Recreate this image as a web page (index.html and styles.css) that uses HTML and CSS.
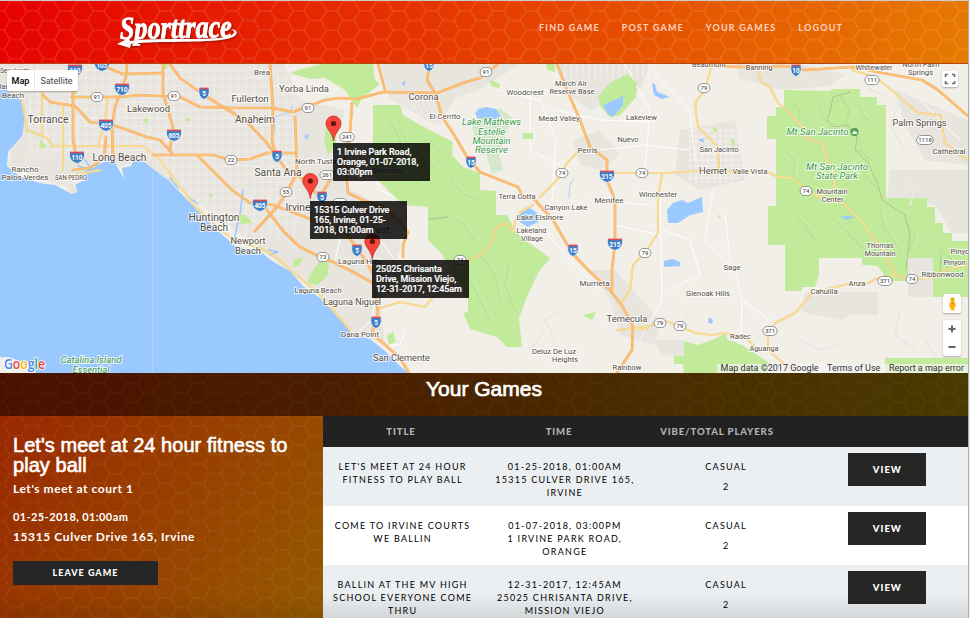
FILE: index.html
```
<!DOCTYPE html>
<html lang="en">
<head>
<meta charset="utf-8">
<title>Sporttrace</title>
<link rel="stylesheet" href="styles.css">
</head>
<body>
<div class="page">
  <header class="topbar">
    <svg class="hexes"><defs><pattern id="hex" width="33.3" height="19.1" patternUnits="userSpaceOnUse" x="26.6" y="10"><path d="M0 0H11.1L16.65 9.55H27.75L33.3 0M0 19.1H11.1L16.65 9.55M27.75 9.55L33.3 19.1" fill="none" stroke="#fff" stroke-opacity=".17" stroke-width="1"/></pattern></defs><rect width="100%" height="100%" fill="url(#hex)"/></svg>
    <svg class="logo" viewBox="0 0 124 36" role="img" aria-label="Sporttrace">
      <text class="logo-text" x="3" y="25" textLength="112" lengthAdjust="spacingAndGlyphs" transform="rotate(-1 60 25)">Sporttrace</text>
      <path d="M0 31L12 25L13 28C45 24 85 28 108 24C117 22 120 19 114 16C122 17 122 23 112 25.500C85 31 45 27 14 31L13 35Z" fill="#fff"/>
    </svg>
    <nav class="nav"><a>FIND GAME</a><a>POST GAME</a><a>YOUR GAMES</a><a>LOGOUT</a></nav>
  </header>

  <section class="map">
    <svg id="terrain" class="terrain" viewBox="0 64 968 309"></svg>
    <div class="map-type"><span class="on">Map</span><span>Satellite</span></div>
    <div class="map-btn full"><svg viewBox="0 0 12 12"><path d="M1.500 4V1.500H4M8 1.500H10.500V4M10.500 8V10.500H8M4 10.500H1.500V8" fill="none" stroke="#707070" stroke-width="1.600"/></svg></div>
    <div class="map-btn pegman"><svg viewBox="0 0 10 16"><circle cx="5" cy="3" r="2.500" fill="#f5a300"/><path d="M2 6H8L9 11H7.500L7 15H3L2.500 11H1Z" fill="#fbb316"/><path d="M3 6H7L5 8Z" fill="#d98200"/></svg></div>
    <div class="map-btn zoomer"><svg viewBox="0 0 18 36"><path d="M5.500 9H12.500M9 5.500V12.500M5.500 27H12.500" stroke="#666" stroke-width="2"/></svg></div>
    <div class="tip tip-a">1 Irvine Park Road, Orange, 01-07-2018, 03:00pm</div>
    <div class="tip tip-b">15315 Culver Drive 165, Irvine, 01-25-2018, 01:00am</div>
    <div class="tip tip-c">25025 Chrisanta Drive, Mission Viejo, 12-31-2017, 12:45am</div>
    <div class="credits"><span>Map data ©2017 Google</span><span>Terms of Use</span><span>Report a map error</span></div>
  </section>

  <section class="games">
    <div class="band"><svg class="hexes faint"><rect width="100%" height="100%" fill="url(#hex)"/></svg><h1>Your Games</h1></div>
    <div class="split">
      <aside class="card">
        <svg class="hexes dim"><rect width="100%" height="100%" fill="url(#hex)"/></svg>
        <h2>Let's meet at 24 hour fitness to play ball</h2>
        <p class="note">Let's meet at court 1</p>
        <p class="when">01-25-2018, 01:00am</p>
        <p class="where">15315 Culver Drive 165, Irvine</p>
        <button class="leave">LEAVE GAME</button>
      </aside>
      <div class="list">
        <div class="head"><span>TITLE</span><span>TIME</span><span>VIBE/TOTAL PLAYERS</span></div>
        <div class="row"><div>LET'S MEET AT 24 HOUR FITNESS TO PLAY BALL</div><div>01-25-2018, 01:00AM<br>15315 CULVER DRIVE 165, IRVINE</div><div>CASUAL<p>2</p></div><button>VIEW</button></div>
        <div class="row"><div>COME TO IRVINE COURTS WE BALLIN</div><div>01-07-2018, 03:00PM<br>1 IRVINE PARK ROAD, ORANGE</div><div>CASUAL<p>2</p></div><button>VIEW</button></div>
        <div class="row"><div>BALLIN AT THE MV HIGH SCHOOL EVERYONE COME THRU</div><div>12-31-2017, 12:45AM<br>25025 CHRISANTA DRIVE, MISSION VIEJO</div><div>CASUAL<p>2</p></div><button>VIEW</button></div>
      </div>
    </div>
    <div class="shade"></div>
  </section>
</div>
<script src="map.js"></script>
</body>
</html>
```
FILE: styles.css
```
* { box-sizing: border-box; }
body { margin: 0; background: #f4f4f4; overflow: hidden; font-family: Lato, sans-serif; }
h1, h2, p { margin: 0; }
button { border: 0; border-radius: 0; background: #262626; color: #fff; font: 900 9.500px Lato, sans-serif; letter-spacing: 1px; padding: 0; }
.page { width: 969px; height: 618px; border-top: 1px solid #ccc; border-right: 1px solid #aaa; overflow: hidden; }

.topbar { position: relative; height: 63px; display: flex; align-items: flex-start; background: linear-gradient(105deg, #e60000, #e67a00); border-bottom: 1px solid #b04a10; }
.hexes { position: absolute; inset: 0; width: 100%; height: 100%; }
.logo { position: relative; width: 124px; height: 36px; margin: 12px 0 0 117px; overflow: visible; filter: drop-shadow(1px 1px 1px rgba(80,0,0,.5)); }
.logo-text { font: italic bold 32px "Liberation Serif", serif; fill: #fff; stroke: #fff; stroke-width: .9px; }
.nav { position: relative; display: flex; gap: 21.800px; margin: 20px 0 0 298px; font-weight: 700; font-size: 9px; line-height: 13px; letter-spacing: 1.2px; color: #ffd2c0; white-space: nowrap; }

.map { position: relative; height: 309px; overflow: hidden; font-family: Roboto, sans-serif; }
.terrain { display: block; width: 968px; height: 309px; background: #f2efe9; }
.map-type { position: absolute; left: 7px; top: 6px; height: 21px; display: flex; background: #fff; border-radius: 2px; box-shadow: 0 1px 2px rgba(0,0,0,.3); font-size: 9px; line-height: 22px; color: #444; }
.map-type span { width: 43px; text-align: center; }
.map-type .on { width: 28px; color: #000; font-weight: 500; border-right: 1px solid #e6e6e6; }
.map-btn { position: absolute; background: #fff; border-radius: 2px; box-shadow: 0 1px 2px rgba(0,0,0,.3); display: flex; align-items: center; justify-content: center; }
.full { left: 942px; top: 7px; width: 16px; height: 16px; }
.full svg { width: 12px; height: 12px; }
.pegman { left: 943px; top: 230px; width: 18px; height: 19px; }
.pegman svg { width: 9px; height: 14px; }
.zoomer { left: 943px; top: 256px; width: 18px; height: 36px; }
.tip { position: absolute; width: 97px; height: 38px; padding: 4px 0 0 4px; background: rgba(0,0,0,.82); color: #fff; font-size: 9px; font-weight: 500; line-height: 10px; letter-spacing: -.05px; -webkit-text-stroke: .2px #fff; }
.tip-a { left: 333px; top: 79px; }
.tip-b { left: 310px; top: 137px; padding-right: 14px; }
.tip-c { left: 372px; top: 196px; padding-right: 6px; }
.credits { position: absolute; right: 0; bottom: 0; height: 9px; display: flex; gap: 8.500px; padding: 0 4px; background: rgba(245,245,245,.7); color: #333; font-size: 9px; line-height: 9px; white-space: nowrap; }

.games { position: relative; }
.band { position: relative; height: 43px; background: linear-gradient(100deg, #4a1000, #4a2200 45%, #4a3a00); }
.faint { opacity: .3; }
.dim { opacity: .5; }
h1 { position: relative; text-align: center; color: #fff; font: 21px/32px "Liberation Sans", sans-serif; -webkit-text-stroke: .7px #fff; }
.split { display: flex; height: 202px; overflow: hidden; }
.card { position: relative; width: 323px; padding: 19px 13px 0; color: #fff; background: linear-gradient(125deg, #9a2800, #984200 55%, #945a00); }
.card > :not(svg) { position: relative; }
h2 { font: 20px/20px "Liberation Sans", sans-serif; letter-spacing: .05px; margin-right: -10px; -webkit-text-stroke: .6px #fff; }
.note { margin-top: 6px; font-size: 12px; line-height: 16px; font-weight: 700; letter-spacing: .55px; }
.when { margin-top: 13px; font-size: 11px; line-height: 14px; font-weight: 700; letter-spacing: .4px; }
.where { margin-top: 5px; font-size: 12px; line-height: 16px; font-weight: 700; letter-spacing: .6px; }
.leave { display: block; width: 145px; height: 24px; margin-top: 16px; padding-bottom: 2px; font-weight: 900; font-size: 9px; }
.list { width: 645px; }
.head { display: grid; grid-template-columns: repeat(4, 158px); margin-left: -1px; padding-left: 1px; height: 31px; background: #222; color: #b4b4b4; font-size: 9.500px; font-weight: 900; line-height: 31px; letter-spacing: .9px; text-align: center; }
.head span { position: relative; left: -1px; }
.row { display: grid; grid-template-columns: repeat(4, 1fr); height: 59px; background: #ebeff2; font-size: 9px; line-height: 13px; letter-spacing: 1.250px; text-align: center; color: #000; }
.row:nth-child(odd) { background: #fff; }
.row > div { padding: 13px 8px 0; }
.row > div:first-child { padding: 13px 9px 0 7px; }
.row p { margin-top: 7px; }
.row button { width: 78px; height: 33px; margin: 6px auto 0; }
.shade { position: absolute; left: 0; right: 0; bottom: 0; height: 24px; background: linear-gradient(transparent, rgba(0,0,0,.1)); }

.label { font-family: Roboto, sans-serif; fill: #554d45; stroke: #fff; stroke-width: 2px; stroke-opacity: .75; paint-order: stroke; text-anchor: middle; }
.park { fill: #3f9a4c; font-style: italic; }
.route { font: 500 6px Roboto, sans-serif; fill: #555; text-anchor: middle; }
.route.inter { fill: #fff; font-weight: 700; font-size: 6.500px; }
.google { font: 600 14px "Open Sans", sans-serif; stroke: #fff; stroke-width: 1.5px; paint-order: stroke; }
```
FILE: map.js
```
const out = [];
const poly = (fill, pts) => out.push(`<polygon points="${pts}" fill="${fill}"/>`);
const line = (color, width, pts) => out.push(`<polyline points="${pts}" fill="none" stroke="${color}" stroke-width="${width}" stroke-linejoin="round" stroke-linecap="round"/>`);
const URBAN = '#e8e4de', PARK = '#c1ea9b', SEA = '#99c9ff', FREEWAY = '#fdc077', HIGHWAY = '#fbe09a';

// Built-up areas
poly(URBAN, '0,64 285,64 300,100 345,110 330,160 352,190 398,215 400,250 380,300 385,345 350,330 320,295 262,250 180,190 140,160 60,185 8,166 20,110 0,85');
poly(URBAN, '380,64 520,64 480,90 455,98 440,125 425,120 390,98');
poly(URBAN, '555,64 650,64 640,90 590,110 565,90');
poly(URBAN, '573,140 600,130 620,155 600,170 580,165');
poly(URBAN, '680,130 735,120 745,180 700,190 675,175');
poly(URBAN, '735,64 800,64 845,74 830,86 780,90 740,78');
poly(URBAN, '895,90 968,120 968,165 925,160 905,125');
poly(URBAN, '590,270 615,270 660,320 655,345 620,335 610,300');
poly(URBAN, '805,292 878,292 878,315 850,315 840,320 802,312');
poly(URBAN, '887,198 935,205 952,233 968,233 968,170 890,170');
poly(URBAN, '908,258 933,258 933,297 908,297');
poly(URBAN, '655,340 684,340 684,356 660,355');

// Local street grid
for (let x = 30; x < 300; x += 8) line('#f7f5f2', .7, `${x},66 ${x},${x < 130 ? 155 : Math.min(240, x + 10)}`);
for (let y = 70; y < 230; y += 8) line('#f7f5f2', .7, `${y < 155 ? 30 : y},${y} 300,${y}`);
for (let x = 565; x < 650; x += 6) line('#faf9f7', .7, `${x},64 ${x},78`);
for (let x = 690; x < 738; x += 6) line('#faf9f7', .7, `${x},128 ${x},182`);
for (let y = 130; y < 184; y += 6) line('#faf9f7', .7, `688,${y} 740,${y}`);
for (let i = 0; i < 7; i++) line('#f9f7f4', .7, `${395 + i * 6},${92 + i} ${410 + i * 6},${112 + i * 3}`);
['500,90 540,100 556,140 552,200', '555,110 600,120 650,122', '530,90 530,150 570,170', '540,225 570,260 600,290', '625,64 650,110 645,170',
 '655,75 690,110 695,160', '660,200 662,300 640,340', '713,190 705,240 735,270 742,300 770,320', '725,215 730,260', '742,300 741,340',
 '650,225 690,240 700,275 670,290', '375,300 372,320 360,330', '330,210 340,240 335,260', '385,210 380,240 395,260', '920,100 960,140', '370,165 380,190 400,200',
 '405,330 400,345 390,345', '600,150 645,145 690,150', '590,200 650,205', '615,225 660,235'].forEach(p => line('#fff', 1, p));

// Ocean
poly(SEA, '0,83 8,92 20,98 25,118 22,136 8,152 7,166 19,176 40,183 55,185 72,194 77,190 75,185 84,180 83,172 95,167 112,158 118,168 124,179 122,168 131,166 134,160 143,161 157,172 168,180 176,188 195,208 218,231 235,246 262,253 272,261 290,271 303,286 320,298 340,319 352,334 370,339 385,351 400,366 408,373 0,373');
poly('#e8e4de', '62,182 72,194 78,192 72,183');
line('#b3d5f8', 1, '152.500,172 152.500,373');
poly('#f2efe9', '0,357 8,357 20,361 34,368 36,373 0,373');
['85,160 92,170 98,172', '78,166 90,170', '93,173 100,161 108,158', '170,178 178,188', '269,250 278,252 270,255', '243,190 240,215 234,240', '190,198 198,204'].forEach(p => line(SEA, 1.5, p));

// Parks and forest
poly(PARK, '373,105 400,105 403,115 420,125 453,142 452,155 463,167 480,173 480,190 496,191 496,215 507,215 515,230 522,238 550,258 538,273 527,297 519,318 522,347 507,347 497,337 470,329 463,313 468,312 468,298 441,253 428,240 428,207 403,205 388,190 373,175');
poly(PARK, '322,64 373,64 375,80 380,84 362,98 357,108 345,90 325,78 310,79 290,73 298,70');
poly(PARK, '784,90 830,91 832,89 860,89 860,97 877,97 877,105 886,105 886,198 927,198 927,207 935,207 935,223 943,223 943,233 952,233 952,241 968,241 968,297 933,297 933,258 908,258 908,281 887,281 878,266 862,265 862,258 819,258 819,274 815,287 802,287 802,291 785,291 785,245 768,245 768,206 776,206 776,139 767,139 767,116 776,116 776,107 784,107');
poly(PARK, '684,341 698,345 712,340 725,334 728,340 742,345 768,362 768,373 684,373 683,364 674,364 674,356 684,356');
poly(PARK, '885,358 968,358 968,373 885,373');
poly(PARK, '598,97 605,88 610,83 628,74 637,83 636,97 620,115 610,117 601,107');
poly(PARK, '322,257 329,263 328,275 318,285 307,283 310,275');
poly(PARK, '327,120 336,125 336,143 328,155 324,140');
poly(PARK, '294,260 303,257 300,264 293,268');
poly(PARK, '235,218 244,214 253,223 241,224');
poly(PARK, '523,133 533,133 533,139 523,139');
poly(PARK, '546,64 555,64 555,72 547,70');
poly(PARK, '490,80 500,84 499,88 491,86');
poly('#d5e8cc', '470,120 500,108 512,118 500,150 480,155');
poly('#d5e8cc', '485,150 498,150 503,170 492,174');
['39,145 41,140 47,147 42,149', '184,120 190,117 189,122', '142,120 148,118 147,124', '72,90 77,90 77,95', '582,315 596,312 592,320', '160,64 168,64 166,70', '712,127 719,130 714,132', '730,138 735,140 733,148', '209,193 213,195 210,198', '717,215 721,216 720,219', '387,335 393,332 396,342 389,345'].forEach(p => poly(PARK, p));
// Terrain relief
['790,100 800,110 797,125 810,130', '840,95 850,110 845,125 860,140', '855,100 865,118 875,122', '860,150 870,160 865,175 878,190', '795,215 805,225 815,240', '830,215 850,235 865,250', '880,210 885,230 900,250', '785,150 795,160 793,180', '400,130 410,150 425,155 435,170', '390,120 400,140 405,165 420,185', '440,215 460,220 475,240', '450,180 465,195 480,200', '480,255 495,275 500,300', '470,280 480,300 490,320', '510,260 505,285 515,310', '425,140 440,150', '820,110 825,120 838,126', '905,220 915,235 910,250', '940,250 955,262 960,280'].forEach(p => { line('#b8e394', 1.5, p); line('#c8eea6', 1, p.replace(/(\d+),/g, (m, x) => `${+x + 3},`)); });
['560,310 545,320 555,340', '690,310 680,330', '900,100 890,125 905,150', '880,70 870,90 885,95', '900,310 895,335 915,350', '925,340 935,355', '800,340 820,350 840,345', '905,180 915,190 910,205', '800,75 815,85', '545,330 530,350'].forEach(p => line('#ebe7e1', 2, p));
out.push('<g stroke-dasharray="2 1.500" opacity=".7">');
line('#a89f86', 1, '850,92 833,97 830,112 827,120 833,127 848,125 857,138 855,150 868,163 878,185 882,200 905,215 910,235 906,270');
line('#a89f86', 1, '429,219 448,217');
line('#a89f86', 1, '941,255 940,272');
out.push('</g>');

// Lakes
['475,114 478,109 486,107 496,109 501,116 495,119 478,118', '517,215 530,208 537,213 538,222 528,227 520,222', '667,210 673,203 682,200 688,203 702,197 703,212 690,215 678,223 668,223', '664,261 673,259 680,262 680,266 664,267', '603,105 615,100 623,96 623,105 613,117 607,113', '652,83 655,84 657,92 670,97 662,99 654,95', '840,217 846,216 855,217 847,220', '709,317 713,320 712,324 708,322', '698,140 703,138 704,143', '402,83 406,80 404,87', '304,136 309,134 307,140'].forEach(p => poly(SEA, p));
line('#a9d0fa', 1, '274,134 275,117 290,112 293,105');
line('#a9d0fa', 1, '569,198 570,185 574,178');

// Highways
['540,197 557,180 567,163 580,150', '380,308 400,302 425,307 432,298 445,285 467,262 483,253 493,240 495,228 507,223 513,232 515,222 520,212 533,205', '607,173 645,173 665,173 698,171 768,172 778,177 792,178 805,188 818,197 842,203 858,217 875,240 885,253 895,273 902,278 912,279 928,278 952,268 968,265', '895,275 878,278 868,283 848,284 812,293 795,313 775,323 768,333 768,350 783,363 790,373', '617,330 645,327 665,321 682,327 695,333 712,335 725,333 745,337 755,347 768,350', '712,64 705,90 695,103 698,127 718,147 719,170', '758,72 762,83 770,87 778,103 792,115 802,127 805,138 822,143 827,160 835,177 833,190 818,197', '852,70 875,77 888,87 918,113 940,115 945,143 960,155 968,160', '662,174 658,197 658,233 645,253 633,265 630,290 622,302', '53,146 143,146 160,160 180,187 195,206 218,228 235,240 262,249 275,256 300,278 320,295 350,330', '22,100 27,130 47,138 53,146', '42,93 42,137', '63,107 63,170', '108,98 105,120 98,147', '60,178 100,170', '633,328 648,329'].forEach(p => { line('#eecb78', 2.1, p); line(HIGHWAY, 1.3, p); });
['430,64 427,80 435,93 442,117 453,133 467,157 480,172 500,180 518,187 523,197 533,198 553,220 572,253 590,272 610,290 623,307 633,327 632,350 617,373', '557,64 567,90 580,120 590,147 607,160 607,180 615,200 615,243 612,270 612,290', '72,97 120,97 140,95 180,97 200,107 233,108 273,108 293,112 303,108 325,100 340,98 357,99 383,92 437,93 463,83 480,78 497,65', '378,64 385,90', '352,103 350,133 345,160 348,193 363,200 385,208 400,222 408,232 403,245 403,257', '170,64 180,78 207,97 233,113 247,122 267,143 277,158 287,170 300,177 320,197 335,217 353,243 363,257 373,273 375,290 378,313 372,333 383,343 400,358 409,373', '43,95 50,102 75,106 90,122 113,125 133,132 147,137 160,140 172,153', '197,155 217,175 232,190 250,203 273,205 308,218 340,235', '267,210 280,227 287,235 300,247 320,257 333,262 353,272 373,283', '255,231 277,207 287,192 297,173 295,117', '153,155 213,155 230,160 250,159 267,153 295,153', '127,64 126,77 115,107 112,127 113,157', '73,70 73,140 78,163', '163,64 163,93 173,127 170,150', '100,64 113,70 123,74 163,73', '270,64 273,110 272,140 275,153', '708,66 745,67 785,66 805,70 852,67 888,74 922,80 938,90 968,116', '73,170 90,168 104,158 106,137', '320,197 331,178 345,160'].forEach(p => { line('#f4ac5c', 2.7, p); line(FREEWAY, 1.8, p); });

// Route shields: [number, x, y]
[['91', 97, 97], ['91', 174, 96], ['91', 308, 108], ['22', 231, 160], ['55', 286, 192], ['241', 347, 137], ['261', 327, 175], ['91', 486, 72], ['74', 562, 173], ['74', 642, 173], ['79', 704, 88], ['111', 872, 80], ['1118', 925, 140], ['74', 806, 191], ['73', 323, 257], ['133', 340, 203], ['74', 460, 260], ['79', 645, 253], ['79', 660, 323], ['79', 680, 326], ['371', 770, 331], ['371', 885, 281], ['74', 912, 279]]
  .forEach(([n, x, y]) => { const w = 7 + n.length * 2.4; out.push(`<rect x="${x - w / 2}" y="${y - 4.5}" width="${w}" height="9" rx="4.500" fill="#fff" stroke="#777" stroke-width=".8"/><text class="route" x="${x}" y="${y + 2.2}">${n}</text>`); });
[['110', 75, 70], ['105', 102, 65], ['710', 122, 89], ['405', 106, 125], ['605', 174, 135], ['110', 77, 157], ['5', 204, 93], ['5', 277, 156], ['405', 260, 205], ['5', 322, 197], ['5', 357, 250], ['5', 376, 322], ['15', 429, 65], ['15', 471, 162], ['215', 607, 176], ['15', 573, 250], ['215', 615, 244], ['10', 796, 70]]
  .forEach(([n, x, y]) => { const w = n.length > 2 ? 8 : 5.5; out.push(`<path d="M${x - w + .5} ${y - 5}H${x + w - .5}Q${x + w + 1} ${y + 4} ${x} ${y + 6.5}Q${x - w - 1} ${y + 4} ${x - w + .5} ${y - 5}Z" fill="#3f7fc6" stroke="#fff" stroke-width=".6"/><path d="M${x - w + 1} ${y - 4.6}H${x + w - 1}" stroke="#dd4a52" stroke-width="1.600"/><text class="route inter" x="${x}" y="${y + 3}">${n}</text>`); });

// Place names: [text, centre x, baseline, width, size]
const label = cls => ([t, x, y, w, s]) => out.push(`<text class="label ${cls}" x="${x}" y="${y}" font-size="${s}" textLength="${w}" lengthAdjust="spacingAndGlyphs">${t}</text>`);
[['Sepulveda', 15, 73, 30, 8], ['Manhattan', 13, 89, 37, 8], ['Beach', 13, 98, 22, 8], ['Torrance', 48, 123, 41, 10], ['Lakewood', 148.5, 112, 43, 9], ['Fullerton', 250, 102, 37, 9], ['Anaheim', 255, 122.5, 40, 10], ['Brea', 262, 75, 16, 8], ['Yorba Linda', 304, 92, 50, 9.5], ['Long Beach', 119.5, 161, 54, 10.5], ['Rancho', 25, 171.5, 27, 8], ['Palos Verdes', 25, 180, 47, 8], ['SAN PEDRO', 71, 179.5, 32, 6.5], ['Santa Ana', 278, 176, 47, 10], ['North Tustin', 317, 164, 44, 8], ['Irvine', 298, 211, 25, 10], ['Huntington', 214, 221, 51, 10], ['Beach', 214, 231, 28, 10], ['Newport', 248, 244, 35, 9.5], ['Beach', 248, 254, 26, 9.5], ['Laguna Hills', 360, 264, 44, 8], ['Laguna Beach', 318, 293, 47, 8], ['Laguna Niguel', 352, 305, 58, 9.5], ['Dana Point', 360, 337, 38, 8], ['San Clemente', 401.5, 361, 57, 9.5], ['Silverado', 388, 173, 31, 8], ['Lake Forest', 363, 233, 54, 9.5],
 ['Corona', 423.5, 100, 30, 9.5], ['El Cerrito', 445, 119, 31, 8], ['Woodcrest', 525, 95, 37, 8], ['March Air', 571, 86, 32, 8], ['Reserve Base', 572, 94, 45, 8], ['Mead Valley', 559, 121, 41, 8], ['Nuevo', 628, 142, 21, 8], ['Lakeview', 641.5, 120, 31, 8], ['Perris', 587.5, 153, 20, 8], ['Terra Cotta', 517, 199, 37, 8], ['Menifee', 609, 203, 29, 8], ['Canyon Lake', 566, 210, 43, 8], ['Lake Elsinore', 540, 219.5, 47, 8], ['Lakeland', 531.5, 233, 30, 8], ['Village', 532, 241, 22, 8], ['Murrieta', 594.5, 286, 30, 8], ['Temecula', 627, 322, 41, 9.5], ['Deluz De Luz', 554, 354, 44, 8], ['Heights', 565, 362, 26, 8], ['Rainbow', 627, 370, 29, 8], ['Winchester', 658, 197, 38, 8], ['San Jacinto', 719, 152, 39, 8], ['Hemet', 713, 174, 28, 9.5], ['Valle Vista', 750, 173.5, 35, 8], ['Beaumont', 709, 67, 34, 8], ['Banning', 759, 70, 27, 8], ['Whitewater', 874, 70, 37, 8], ['North Palm', 921, 67, 37, 8], ['Springs', 920.5, 75, 25, 8], ['Palm Springs', 919.500, 125.5, 54, 9.5], ['Cathedral', 949, 154, 33, 8], ['Mountain', 832, 194, 31, 8], ['Center', 832.5, 202, 22, 8], ['Thomas', 880, 248, 27, 8], ['Mountain', 880, 255.5, 31, 8], ['Sage', 732, 270, 17, 8], ['Glenoak Hills', 708, 296, 44, 8], ['Cahuilla', 824, 294, 27, 8], ['Anza', 857, 285.5, 17, 8], ['Pinyon', 962, 254, 23, 8], ['Pinyon', 954.5, 265, 22, 8], ['Ribbonwood', 942.5, 277, 42, 8], ['Radec', 740.5, 339, 21, 8], ['Aguanga', 764, 351, 29, 8]].forEach(label(''));
[['Lake Mathews', 491.5, 125, 59, 9], ['Estelle', 491.5, 134.500, 27, 9], ['Mountain', 491.5, 143.500, 38, 9], ['Reserve', 491.5, 153, 33, 9], ['Mt San Jacinto', 817.500, 135, 62, 9], ['Mt San Jacinto', 837, 169.500, 62, 9], ['State Park', 837, 178.500, 42, 9], ['Catalina Island', 91, 363, 61, 9], ['Essential', 91, 372.500, 37, 9]].forEach(label('park'));
out.push('<circle cx="854.500" cy="132" r="4" fill="#4c9f51"/><path d="M852 134L854 130L855 132L856 131L857.500 134Z" fill="#fff"/>');

// Markers: tip position
[[333.500, 141], [310.300, 198.500], [372.300, 259]].forEach(([x, y]) => out.push(`<path d="M${x} ${y}C${x - 1} ${y - 9} ${x - 7.500} ${y - 12} ${x - 7.500} ${y - 17.500}A7.500 7.500 0 0 1 ${x + 7.500} ${y - 17.500}C${x + 7.500} ${y - 12} ${x + 1} ${y - 9} ${x} ${y}Z" fill="#f8453c" stroke="#c32820" stroke-width=".8"/><circle cx="${x}" cy="${y - 17.500}" r="2.600" fill="#631510"/>`));

const g = [['G', '#4285f4'], ['o', '#ea4335'], ['o', '#fbbc05'], ['g', '#4285f4'], ['l', '#34a853'], ['e', '#ea4335']];
out.push(`<text class="google" x="4" y="369" textLength="41" lengthAdjust="spacingAndGlyphs">${g.map(([c, f]) => `<tspan fill="${f}">${c}</tspan>`).join('')}</text>`);
document.getElementById('terrain').innerHTML = out.join('');
```
